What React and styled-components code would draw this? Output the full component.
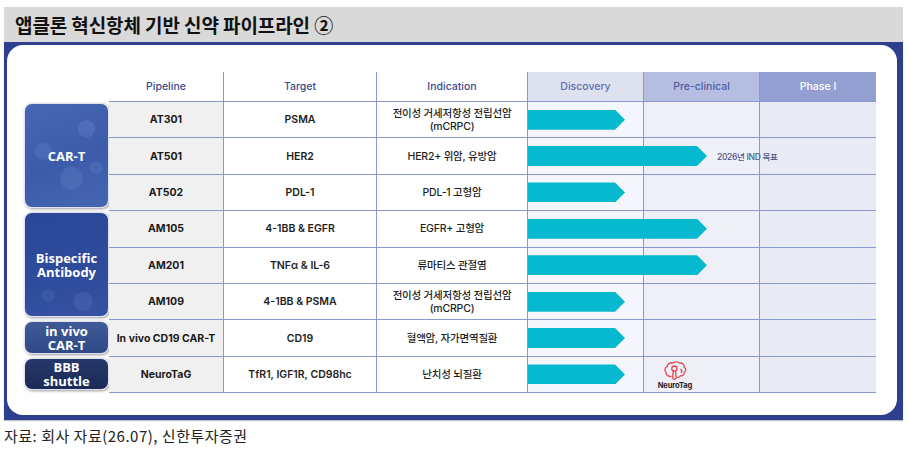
import React from 'react';
import styled, { createGlobalStyle, css } from 'styled-components';

const LINE = '#8a97d1';
const ROW_H = 36.4;
const STAGE_W = 116;

const groups = [
  {
    label: 'CAR-T',
    tone: 'cart',
    rows: [
      { code: 'AT301', target: 'PSMA', indication: '전이성 거세저항성 전립선암\n(mCRPC)', len: 97 },
      { code: 'AT501', target: 'HER2', indication: 'HER2+ 위암, 유방암', len: 179, note: '2026년 IND 목표' },
      { code: 'AT502', target: 'PDL-1', indication: 'PDL-1 고형암', len: 97 },
    ],
  },
  {
    label: 'Bispecific\nAntibody',
    tone: 'bispecific',
    rows: [
      { code: 'AM105', target: '4-1BB & EGFR', indication: 'EGFR+ 고형암', len: 179 },
      { code: 'AM201', target: 'TNFα & IL-6', indication: '류마티스 관절염', len: 179 },
      { code: 'AM109', target: '4-1BB & PSMA', indication: '전이성 거세저항성 전립선암\n(mCRPC)', len: 97 },
    ],
  },
  {
    label: 'in vivo\nCAR-T',
    tone: 'invivo',
    rows: [
      { code: 'In vivo CD19 CAR-T', target: 'CD19', indication: '혈액암, 자가면역질환', len: 97 },
    ],
  },
  {
    label: 'BBB\nshuttle',
    tone: 'bbb',
    rows: [
      { code: 'NeuroTaG', target: 'TfR1, IGF1R, CD98hc', indication: '난치성 뇌질환', len: 97, logo: true },
    ],
  },
];

const stages = [
  { name: 'Discovery', head: '#dde1f0', body: '#f5f6fb', text: '#5f6fae' },
  { name: 'Pre-clinical', head: '#b5bde1', body: '#eff0f7', text: '#4d5da3' },
  { name: 'Phase I', head: '#939fd0', body: '#e8eaf4', text: '#ffffff' },
];

const NeuroTagIcon = () => (
  <svg width="25" height="21" viewBox="0 0 25 21" fill="none" stroke="#e5454b" strokeWidth="1.3" strokeLinejoin="round" strokeLinecap="round">
    <path d="M8 16.5 C4.8 16.6 2.6 14.6 3 12 C1.2 10.6 1.6 7.4 4.2 6.8 C4.2 3.6 7.4 2 9.8 3.2 C11.4 1.4 15 1.3 16.6 3.1 C19.2 2.6 21.8 4.6 21.2 7.3 C23.4 8.3 23.3 11.4 21.1 12.3 C21.6 14.5 19.6 16.3 17.4 15.8 C16.8 17 15.6 17.6 14.6 17.3" />
    <path d="M17.6 9.4 C19 9.8 19.4 11.6 18.2 12.4" />
    <circle cx="11.4" cy="8.6" r="2.6" />
    <path d="M10.3 11 L9.6 17.6 C9.6 18.6 10.4 19.4 11.4 19.4 C12.4 19.4 13.2 18.6 13.2 17.6 L12.5 11" />
  </svg>
);

const App = () => (
  <Page>
    <GlobalStyle />
    <TitleBar>앱클론 혁신항체 기반 신약 파이프라인 ②</TitleBar>
    <Frame>
      <Card>
        <Table>
          <CategoryColumn>
            <HeaderSpacer />
            {groups.map((g) => (
              <CategoryGroup key={g.label} $rows={g.rows.length}>
                <CategoryBox $tone={g.tone}>{g.label}</CategoryBox>
              </CategoryGroup>
            ))}
          </CategoryColumn>

          <Body>
            <HeaderRow>
              <HeadCell>Pipeline</HeadCell>
              <HeadCell>Target</HeadCell>
              <HeadCell>Indication</HeadCell>
              {stages.map((s, i) => (
                <StageHead key={s.name} $bg={s.head} $color={s.text} $last={i === stages.length - 1}>
                  {s.name}
                </StageHead>
              ))}
            </HeaderRow>

            {groups.flatMap((g) => g.rows).map((r) => (
              <DataRow key={r.code}>
                <PipelineCell>{r.code}</PipelineCell>
                <TargetCell>{r.target}</TargetCell>
                <IndicationCell>{r.indication}</IndicationCell>
                <Track>
                  {stages.map((s, i) => (
                    <StageCell key={s.name} $bg={s.body} $last={i === stages.length - 1} />
                  ))}
                  <Overlay>
                    <Arrow $len={r.len} />
                    {r.note && <Note>{r.note}</Note>}
                    {r.logo && (
                      <Logo>
                        <NeuroTagIcon />
                        <LogoText>NeuroTag</LogoText>
                      </Logo>
                    )}
                  </Overlay>
                </Track>
              </DataRow>
            ))}
          </Body>
        </Table>
      </Card>
    </Frame>
    <Source>자료: 회사 자료(26.07), 신한투자증권</Source>
  </Page>
);

const GlobalStyle = createGlobalStyle`
  html, body {
    margin: 0;
    padding: 0;
    background: #ffffff;
  }
  body {
    font-family: Inter, "Noto Sans CJK KR", sans-serif;
    color: #1c1c1c;
  }
`;

const Page = styled.div`
  width: 899px;
  padding: 7px 6px 0 4px;
`;

const TitleBar = styled.div`
  height: 35px;
  background: #d9d9d9;
  display: flex;
  align-items: center;
  padding-left: 11px;
  font-family: "Noto Sans CJK KR", sans-serif;
  font-weight: 700;
  font-size: 19px;
  letter-spacing: -0.1px;
  color: #111;
`;

const Frame = styled.div`
  background: #2e3f8d;
  padding: 3px 6px 5px 3px;
  box-shadow: 0 1px 1px rgba(0, 0, 0, 0.25);
`;

const Card = styled.div`
  background: #ffffff;
  border-radius: 16px;
  height: 370px;
  box-sizing: border-box;
  padding: 27px 0 0 17px;
`;

const Table = styled.div`
  display: flex;
`;

const CategoryColumn = styled.div`
  width: 85px;
  display: flex;
  flex-direction: column;
`;

const HeaderSpacer = styled.div`
  height: 30px;
`;

const CategoryGroup = styled.div`
  height: ${(p) => p.$rows * ROW_H}px;
  box-sizing: border-box;
  padding: 1px 0 3px;
  display: flex;
`;

const tones = {
  cart: css`
    background:
      radial-gradient(circle at 74% 24%, rgba(130, 160, 225, 0.22) 0 8px, transparent 9px),
      radial-gradient(circle at 22% 46%, rgba(130, 160, 225, 0.16) 0 8px, transparent 9px),
      radial-gradient(circle at 56% 72%, rgba(130, 160, 225, 0.16) 0 11px, transparent 12px),
      radial-gradient(circle at 86% 62%, rgba(130, 160, 225, 0.14) 0 6px, transparent 7px),
      linear-gradient(160deg, #4766b3 0%, #3c5cab 55%, #4566b0 100%);
  `,
  bispecific: css`
    background:
      radial-gradient(circle at 70% 86%, rgba(120, 150, 220, 0.16) 0 9px, transparent 10px),
      radial-gradient(circle at 28% 80%, rgba(120, 150, 220, 0.12) 0 6px, transparent 7px),
      linear-gradient(170deg, #2b4898 0%, #2f4c9c 60%, #3553a2 100%);
  `,
  invivo: css`
    background: linear-gradient(180deg, #3f5a97 0%, #2f4a87 100%);
  `,
  bbb: css`
    background: linear-gradient(180deg, #25386a 0%, #1c2a56 100%);
  `,
};

const CategoryBox = styled.div`
  flex: 1;
  border-radius: 8px;
  border: 1px solid #dde2ee;
  box-shadow: 1px 1px 3px rgba(0, 0, 0, 0.4);
  display: flex;
  align-items: center;
  justify-content: center;
  white-space: pre-line;
  color: #ffffff;
  font-family: "Open Sans", sans-serif;
  font-weight: 700;
  font-size: 13px;
  line-height: 14px;
  text-align: center;
  ${(p) => tones[p.$tone]}
`;

const Body = styled.div`
  display: flex;
  flex-direction: column;
`;

const HeaderRow = styled.div`
  display: grid;
  grid-template-columns: 115px 153px 151px repeat(3, ${STAGE_W}px);
  height: 30px;
`;

const cellBase = css`
  box-sizing: border-box;
  display: flex;
  align-items: center;
  justify-content: center;
  text-align: center;
  border-bottom: 1px solid ${LINE};
  border-right: 1px solid ${LINE};
`;

const HeadCell = styled.div`
  ${cellBase}
  color: #3b4b8d;
  font-size: 10.5px;
  font-weight: 500;
`;

const StageHead = styled.div`
  ${cellBase}
  background: ${(p) => p.$bg};
  color: ${(p) => p.$color};
  font-size: 10.5px;
  font-weight: 500;
  border-right: ${(p) => (p.$last ? 'none' : `1px solid ${LINE}`)};
`;

const DataRow = styled.div`
  display: grid;
  grid-template-columns: 115px 153px 151px ${STAGE_W * 3}px;
  height: ${ROW_H}px;
`;

const PipelineCell = styled.div`
  ${cellBase}
  background: #f0f0f0;
  font-size: 10.5px;
  font-weight: 700;
  color: #1a1a1a;
`;

const TargetCell = styled.div`
  ${cellBase}
  font-size: 10.5px;
  font-weight: 600;
  color: #1e1e1e;
`;

const IndicationCell = styled.div`
  ${cellBase}
  white-space: pre-line;
  font-size: 10.5px;
  font-weight: 500;
  line-height: 13px;
  color: #1e1e1e;
  letter-spacing: -0.2px;
`;

const Track = styled.div`
  position: relative;
  display: grid;
  grid-template-columns: repeat(3, 1fr);
`;

const StageCell = styled.div`
  box-sizing: border-box;
  background: ${(p) => p.$bg};
  border-bottom: 1px solid ${LINE};
  border-right: ${(p) => (p.$last ? 'none' : `1px solid ${LINE}`)};
`;

const Overlay = styled.div`
  position: absolute;
  inset: 0 0 1px 0;
  display: flex;
  align-items: center;
`;

const Arrow = styled.div`
  width: ${(p) => p.$len}px;
  height: 20px;
  flex-shrink: 0;
  background: #06b9cf;
  clip-path: polygon(0 0, calc(100% - 10px) 0, 100% 50%, calc(100% - 10px) 100%, 0 100%);
`;

const Note = styled.span`
  margin-left: 10px;
  font-size: 8.5px;
  font-weight: 500;
  color: #4b5788;
  letter-spacing: -0.3px;
  white-space: nowrap;
`;

const Logo = styled.div`
  margin-left: 30px;
  width: 40px;
  display: flex;
  flex-direction: column;
  align-items: center;
  padding-top: 2px;
`;

const LogoText = styled.span`
  font-size: 7.5px;
  font-weight: 700;
  color: #222;
  letter-spacing: -0.1px;
`;

const Source = styled.div`
  margin-top: 6px;
  font-family: "Noto Sans CJK KR", sans-serif;
  font-size: 15px;
  letter-spacing: 0.5px;
  color: #222;
  line-height: 19px;
`;

export default App;
